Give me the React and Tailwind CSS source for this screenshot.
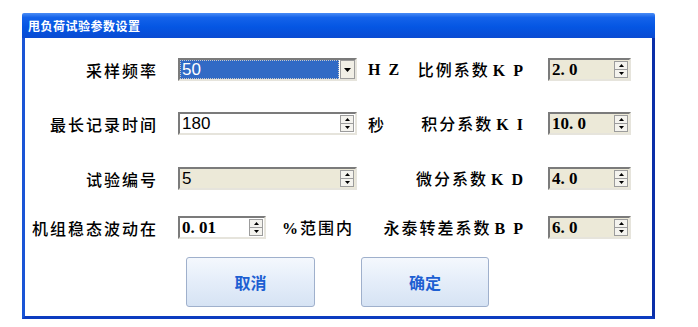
import React from "react";

const CJK = { fontFamily: '"Noto Sans CJK SC", "Noto Sans", sans-serif' };
const SERIF = { fontFamily: '"Liberation Serif", "DejaVu Serif", serif' };
const SANS = { fontFamily: '"Liberation Sans", Arial, sans-serif' };

function Up() {
  return (
    <svg width="5" height="3" viewBox="0 0 5 3"><path d="M2.5 0 L5 3 L0 3 Z" fill="#000" /></svg>
  );
}
function Down() {
  return (
    <svg width="5" height="3" viewBox="0 0 5 3"><path d="M0 0 L5 0 L2.5 3 Z" fill="#000" /></svg>
  );
}

function SpinButtons() {
  return (
    <div className="flex flex-col w-[14px] h-full py-[1px] mr-[1px]">
      <div className="flex-1 flex items-center justify-center bg-[#f4f3ee] border border-[#9c9c9c] border-b-0">
        <Up />
      </div>
      <div className="flex-1 flex items-center justify-center bg-[#f4f3ee] border border-[#9c9c9c]">
        <Down />
      </div>
    </div>
  );
}

function Spin({ width, bg, children, font, textCls }) {
  return (
    <div
      className={`${width} ${bg} h-[23px] flex items-stretch border-2 border-t-[#7b7b7b] border-l-[#7b7b7b] border-b-[#e6e4dc] border-r-[#e6e4dc]`}
    >
      <div className={`flex-1 flex items-center pl-[2px] text-black ${textCls}`} style={font}>
        {children}
      </div>
      <SpinButtons />
    </div>
  );
}

function Label({ children, className = "" }) {
  return (
    <div
      className={`text-[16px] font-medium tracking-[2px] text-black whitespace-nowrap leading-none ${className}`}
      style={CJK}
    >
      {children}
    </div>
  );
}

function Latin({ children, className = "" }) {
  return (
    <span className={`font-bold text-[16px] tracking-[8px] ${className}`} style={SERIF}>
      {children}
    </span>
  );
}

function RightPart({ label, value }) {
  return (
    <>
      <div className="flex-1" />
      <Label className="text-right">{label}</Label>
      <div className="ml-[17px]">
        <Spin width="w-[83px]" bg="bg-[#ece9d8]" font={SERIF} textCls="text-[17px] font-bold">
          {value}
        </Spin>
      </div>
    </>
  );
}

export default function App() {
  return (
    <div className="w-[698px] h-[327px] bg-white pl-[22px] pt-[13px]">
      <div className="w-[633px] h-[306px] flex flex-col">
        <div className="h-[25px] rounded-t-[2px] bg-[linear-gradient(to_bottom,#4a8cf5_0%,#1463ea_18%,#0556e3_55%,#0a4bd2_100%)] flex items-center pl-[6px]">
          <span className="text-white text-[12px] font-bold tracking-[0.5px]" style={CJK}>
            甩负荷试验参数设置
          </span>
        </div>
        <div className="flex-1 flex flex-col bg-white border-l-[3px] border-l-[#1a55d6] border-r-[3px] border-r-[#0b2fa8] border-b-[3px] border-b-[#0c3cc0] pr-[21px]">
          {/* Row 1 */}
          <div className="flex items-center mt-[19px]">
            <Label className="w-[133px] text-right">采样频率</Label>
            <div className="ml-[20px] w-[179px] h-[23px] flex items-stretch border-2 border-t-[#7b7b7b] border-l-[#7b7b7b] border-b-[#e6e4dc] border-r-[#e6e4dc] bg-white">
              <div className="flex-1 flex items-center bg-[#316ac5] border border-dotted border-[#c8c8c8] pl-[1px] text-white text-[17px]" style={SANS}>
                50
              </div>
              <div className="w-[15px] flex items-center justify-center bg-[#f1efe6] border border-[#9c9c9c] ml-[1px]">
                <svg width="7" height="4" viewBox="0 0 7 4"><path d="M0 0 L7 0 L3.5 4 Z" fill="#000" /></svg>
              </div>
            </div>
            <div className="ml-[11px]"><Latin>HZ</Latin></div>
            <RightPart label={<>比例系数<Latin className="ml-[3px]">KP</Latin></>} value="2. 0" />
          </div>
          {/* Row 2 */}
          <div className="flex items-center mt-[30px]">
            <Label className="w-[133px] text-right">最长记录时间</Label>
            <div className="ml-[20px]">
              <Spin width="w-[179px]" bg="bg-white" font={SANS} textCls="text-[17px]">180</Spin>
            </div>
            <div className="ml-[11px]"><Label>秒</Label></div>
            <RightPart label={<>积分系数<Latin className="ml-[3px]">KI</Latin></>} value="10. 0" />
          </div>
          {/* Row 3 */}
          <div className="flex items-center mt-[32px]">
            <Label className="w-[133px] text-right">试验编号</Label>
            <div className="ml-[20px]">
              <Spin width="w-[179px]" bg="bg-[#ece9d8]" font={SANS} textCls="text-[17px]">5</Spin>
            </div>
            <RightPart label={<>微分系数<Latin className="ml-[3px]">KD</Latin></>} value="4. 0" />
          </div>
          {/* Row 4 */}
          <div className="flex items-center mt-[26px]">
            <Label className="w-[133px] text-right">机组稳态波动在</Label>
            <div className="ml-[20px]">
              <Spin width="w-[88px]" bg="bg-white" font={SERIF} textCls="text-[17px] font-bold">0. 01</Spin>
            </div>
            <div className="ml-[16px]">
              <Label><span style={SERIF} className="font-bold">%</span>范围内</Label>
            </div>
            <RightPart label={<>永泰转差系数<Latin className="ml-[3px]">BP</Latin></>} value="6. 0" />
          </div>
          {/* Buttons */}
          <div className="flex mt-[18px] pl-[161px] gap-[46px]">
            <button className="w-[129px] h-[50px] rounded-[3px] border border-[#9fb0cc] bg-[linear-gradient(to_bottom,#f4f8fd_0%,#e4edf9_50%,#d6e3f4_100%)] text-[#1d5fd2] text-[16px] font-bold" style={CJK}>
              取消
            </button>
            <button className="w-[128px] h-[50px] rounded-[3px] border border-[#9fb0cc] bg-[linear-gradient(to_bottom,#f4f8fd_0%,#e4edf9_50%,#d6e3f4_100%)] text-[#1d5fd2] text-[16px] font-bold" style={CJK}>
              确定
            </button>
          </div>
        </div>
      </div>
    </div>
  );
}
